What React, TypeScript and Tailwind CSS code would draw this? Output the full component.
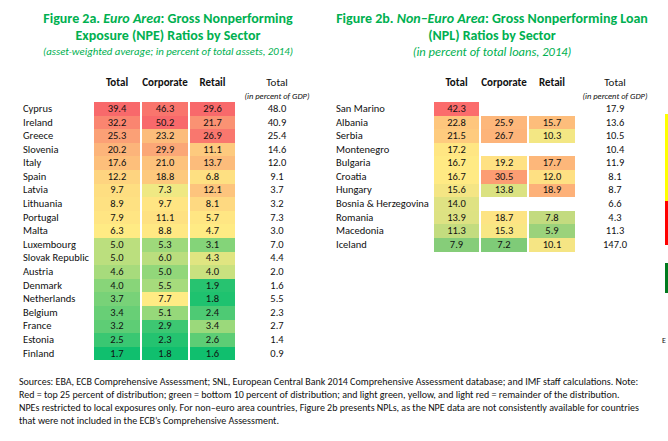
import React from "react";

type Row = {
  name: string;
  total: number;
  corp?: number;
  retail?: number;
  gdp: string;
};

const euroRows: Row[] = [
  { name: "Cyprus", total: 39.4, corp: 46.3, retail: 29.6, gdp: "48.0" },
  { name: "Ireland", total: 32.2, corp: 50.2, retail: 21.7, gdp: "40.9" },
  { name: "Greece", total: 25.3, corp: 23.2, retail: 26.9, gdp: "25.4" },
  { name: "Slovenia", total: 20.2, corp: 29.9, retail: 11.1, gdp: "14.6" },
  { name: "Italy", total: 17.6, corp: 21.0, retail: 13.7, gdp: "12.0" },
  { name: "Spain", total: 12.2, corp: 18.8, retail: 6.8, gdp: "9.1" },
  { name: "Latvia", total: 9.7, corp: 7.3, retail: 12.1, gdp: "3.7" },
  { name: "Lithuania", total: 8.9, corp: 9.7, retail: 8.1, gdp: "3.2" },
  { name: "Portugal", total: 7.9, corp: 11.1, retail: 5.7, gdp: "7.3" },
  { name: "Malta", total: 6.3, corp: 8.8, retail: 4.7, gdp: "3.0" },
  { name: "Luxembourg", total: 5.0, corp: 5.3, retail: 3.1, gdp: "7.0" },
  { name: "Slovak Republic", total: 5.0, corp: 6.0, retail: 4.3, gdp: "4.4" },
  { name: "Austria", total: 4.6, corp: 5.0, retail: 4.0, gdp: "2.0" },
  { name: "Denmark", total: 4.0, corp: 5.5, retail: 1.9, gdp: "1.6" },
  { name: "Netherlands", total: 3.7, corp: 7.7, retail: 1.8, gdp: "5.5" },
  { name: "Belgium", total: 3.4, corp: 5.1, retail: 2.4, gdp: "2.3" },
  { name: "France", total: 3.2, corp: 2.9, retail: 3.4, gdp: "2.7" },
  { name: "Estonia", total: 2.5, corp: 2.3, retail: 2.6, gdp: "1.4" },
  { name: "Finland", total: 1.7, corp: 1.8, retail: 1.6, gdp: "0.9" },
];

// non-euro colours were set by hand in the source chart, so keep them as-is
const nonEuroRows: (Row & { c: string[] })[] = [
  { name: "San Marino", total: 42.3, gdp: "17.9", c: ["#fb6c6c"] },
  { name: "Albania", total: 22.8, corp: 25.9, retail: 15.7, gdp: "13.6", c: ["#fec67d", "#fdb77b", "#fdbd7b"] },
  { name: "Serbia", total: 21.5, corp: 26.7, retail: 10.3, gdp: "10.5", c: ["#fecb7e", "#fdb47a", "#f3e784"] },
  { name: "Montenegro", total: 17.2, gdp: "10.4", c: ["#ffe683"] },
  { name: "Bulgaria", total: 16.7, corp: 19.2, retail: 17.7, gdp: "11.9", c: ["#ffea84", "#ffe183", "#fdb77a"] },
  { name: "Croatia", total: 16.7, corp: 30.5, retail: 12.0, gdp: "8.1", c: ["#ffea84", "#fc9d73", "#fee083"] },
  { name: "Hungary", total: 15.6, corp: 13.8, retail: 18.9, gdp: "8.7", c: ["#f4e584", "#dbe282", "#fdb179"] },
  { name: "Bosnia & Herzegovina", total: 14.0, gdp: "6.6", c: ["#dfe283"] },
  { name: "Romania", total: 13.9, corp: 18.7, retail: 7.8, gdp: "4.3", c: ["#dde283", "#fde484", "#c3db7f"] },
  { name: "Macedonia", total: 11.3, corp: 15.3, retail: 5.9, gdp: "11.3", c: ["#c3dc7f", "#f8e784", "#9bd27b"] },
  { name: "Iceland", total: 7.9, corp: 7.2, retail: 10.1, gdp: "147.0", c: ["#86cd79", "#7fcb78", "#f5e584"] },
];

const RED = [248, 105, 107];
const YELLOW = [255, 235, 132];
const GREEN = [16, 191, 110];

function mix(a: number[], b: number[], t: number) {
  const c = a.map((v, i) => Math.round(v + (b[i] - v) * t));
  return `rgb(${c[0]}, ${c[1]}, ${c[2]})`;
}

function makeScale(values: number[]) {
  const s = [...values].sort((a, b) => a - b);
  const min = s[0];
  const max = s[s.length - 1];
  const mid = s[Math.floor(s.length / 2)];
  return (v: number) =>
    v >= mid
      ? mix(YELLOW, RED, (v - mid) / (max - mid))
      : mix(YELLOW, GREEN, (mid - v) / (mid - min));
}

const totalScale = makeScale(euroRows.map((r) => r.total));
const corpScale = makeScale(euroRows.map((r) => r.corp!));
const retailScale = makeScale(euroRows.map((r) => r.retail!));

const font = { fontFamily: "Carlito, Lato, 'Liberation Sans', sans-serif" };

function Cell({ value, color }: { value?: number; color?: string }) {
  if (value === undefined) return <div />;
  return (
    <div
      className="flex h-[13.6px] items-center justify-center"
      style={{ backgroundColor: color }}
    >
      {value.toFixed(1)}
    </div>
  );
}

function Header({ cols }: { cols: string }) {
  return (
    <>
      <div className={`grid ${cols} gap-x-[2px] text-[11px] font-bold leading-[12px]`}>
        <div />
        <div className="text-center">Total</div>
        <div className="text-center">Corporate</div>
        <div className="text-center">Retail</div>
        <div className="text-center font-normal">Total</div>
      </div>
      <div className={`grid ${cols} mt-[2px] gap-x-[2px] text-[8.5px] italic leading-[11px]`}>
        <div />
        <div />
        <div />
        <div />
        <div className="whitespace-nowrap text-center">(in percent of GDP)</div>
      </div>
    </>
  );
}

export default function App() {
  return (
    <div className="relative h-[441px] w-[668px] overflow-hidden bg-white text-[#111]" style={font}>
      <div className="flex">
        {/* Figure 2a */}
        <div className="w-[336px] pt-[10px]">
          <div className="text-center text-[14px] font-bold leading-[17px] text-[#00b050]">
            <div className="whitespace-nowrap">
              Figure 2a. <span className="italic">Euro Area</span>: Gross Nonperforming
            </div>
            <div>Exposure (NPE) Ratios by Sector</div>
          </div>
          <div className="whitespace-nowrap text-center text-[10.8px] italic leading-[16px] text-[#00b050]">
            (asset-weighted average; in percent of total assets, 2014)
          </div>
          <div className="mt-[17px] pl-[23px]">
            <Header cols="grid-cols-[69px_46px_46px_45px_80px]" />
            <div className="text-[10.5px]">
              {euroRows.map((r) => (
                <div key={r.name} className="grid grid-cols-[69px_46px_46px_45px_80px] gap-x-[2px]">
                  <div className="flex h-[13.6px] items-center whitespace-nowrap">{r.name}</div>
                  <Cell value={r.total} color={totalScale(r.total)} />
                  <Cell value={r.corp} color={corpScale(r.corp!)} />
                  <Cell value={r.retail} color={retailScale(r.retail!)} />
                  <div className="flex h-[13.6px] items-center justify-center">{r.gdp}</div>
                </div>
              ))}
            </div>
          </div>
        </div>

        {/* Figure 2b */}
        <div className="w-[312px] pt-[10px]">
          <div className="text-center text-[14px] font-bold leading-[17px] text-[#00b050]">
            <div className="whitespace-nowrap">
              Figure 2b. <span className="italic">Non–Euro Area</span>: Gross Nonperforming Loan
            </div>
            <div>(NPL) Ratios by Sector</div>
          </div>
          <div className="text-center text-[12.5px] italic leading-[16px] text-[#00b050]">
            (in percent of total loans, 2014)
          </div>
          <div className="mt-[17px]">
            <Header cols="grid-cols-[96px_45px_46px_46px_76px]" />
            <div className="text-[10.5px]">
              {nonEuroRows.map((r) => (
                <div key={r.name} className="grid grid-cols-[96px_45px_46px_46px_76px] gap-x-[2px]">
                  <div className="flex h-[13.6px] items-center whitespace-nowrap">{r.name}</div>
                  <Cell value={r.total} color={r.c[0]} />
                  <Cell value={r.corp} color={r.c[1]} />
                  <Cell value={r.retail} color={r.c[2]} />
                  <div className="flex h-[13.6px] items-center justify-center">{r.gdp}</div>
                </div>
              ))}
            </div>
          </div>
        </div>
      </div>

      {/* notes */}
      <div className="mt-[15px] pl-[19px] text-[10px] leading-[13px] whitespace-nowrap">
        <div>
          Sources: EBA, ECB Comprehensive Assessment; SNL, European Central Bank 2014 Comprehensive Assessment database; and IMF staff calculations. Note:
        </div>
        <div>
          Red = top 25 percent of distribution; green = bottom 10 percent of distribution; and light green, yellow, and light red = remainder of the distribution.
        </div>
        <div>
          NPEs restricted to local exposures only. For non–euro area countries, Figure 2b presents NPLs, as the NPE data are not consistently available for countries
        </div>
        <div>that were not included in the ECB’s Comprehensive Assessment.</div>
      </div>

      {/* clipped chart bits from the next page column */}
      <div className="absolute right-0 top-[114px] h-[87px] w-[3px] bg-[#ffff00]" />
      <div className="absolute right-0 top-[201px] h-[44px] w-[3px] bg-[#ff0000]" />
      <div className="absolute right-0 top-[263px] h-[30px] w-[3px] bg-[#007a1e]" />
      <div className="absolute left-[662px] top-[335px] text-[8px] leading-[10px]">E</div>
    </div>
  );
}
